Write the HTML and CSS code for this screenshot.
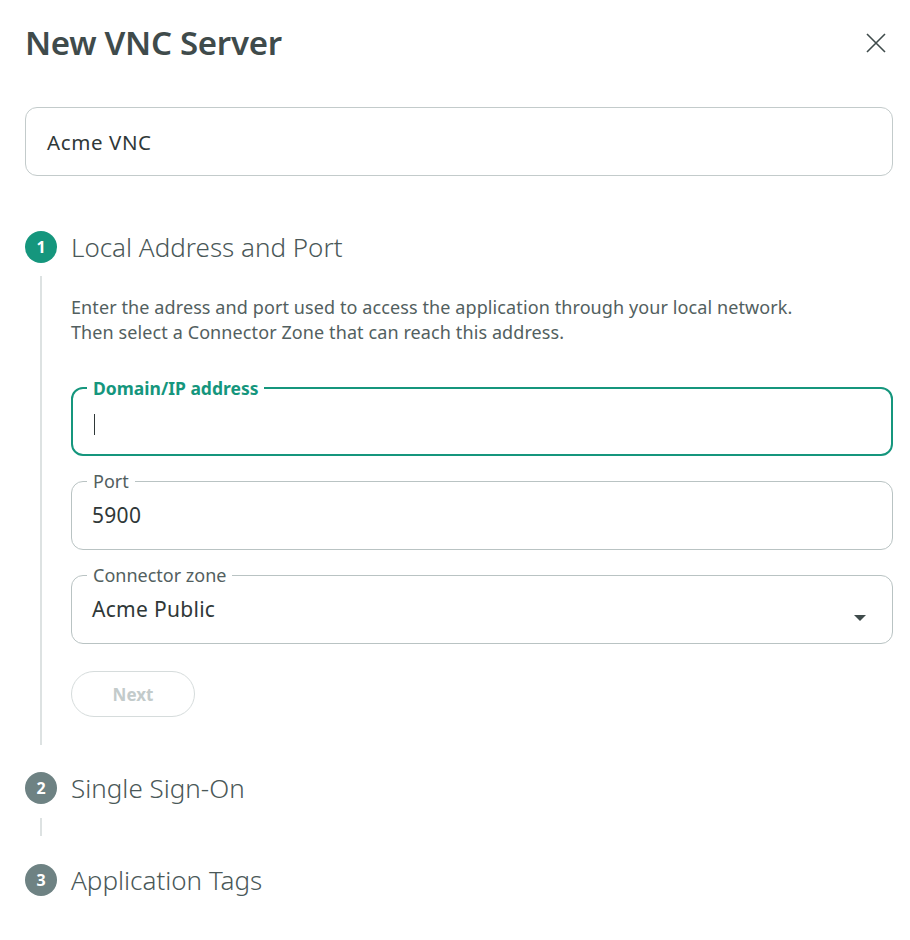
FILE: index.html
```html
<!DOCTYPE html>
<html lang="en">
<head>
  <meta charset="UTF-8">
  <title>New VNC Server</title>
  <link rel="stylesheet" href="styles.css">
</head>
<body>
  <div class="dialog">
    <div class="header">
      <h1>New VNC Server</h1>
      <button class="close" aria-label="Close">
        <svg width="22" height="22" viewBox="0 0 22 22"><path d="M2 2L20 20M20 2L2 20" stroke="#3f4b4b" stroke-width="1.6" fill="none"/></svg>
      </button>
    </div>

    <div class="name-box">Acme VNC</div>

    <div class="step active">
      <div class="step-head">
        <span class="num">1</span>
        <span class="step-title">Local Address and Port</span>
      </div>
      <div class="step-body">
        <p class="desc">Enter the adress and port used to access the application through your local network.<br>Then select a Connector Zone that can reach this address.</p>

        <fieldset class="field focused">
          <legend>Domain/IP address</legend>
          <div class="value"><span class="cursor"></span></div>
        </fieldset>

        <fieldset class="field">
          <legend>Port</legend>
          <div class="value">5900</div>
        </fieldset>

        <fieldset class="field select">
          <legend>Connector zone</legend>
          <div class="value">Acme Public</div>
          <span class="caret"></span>
        </fieldset>

        <button class="next" disabled>Next</button>
      </div>
    </div>

    <div class="step">
      <div class="step-head">
        <span class="num">2</span>
        <span class="step-title">Single Sign-On</span>
      </div>
      <div class="step-body short"></div>
    </div>

    <div class="step">
      <div class="step-head">
        <span class="num">3</span>
        <span class="step-title">Application Tags</span>
      </div>
    </div>
  </div>
</body>
</html>
```

FILE: styles.css
```css
body {
  margin: 0;
  background: white;
  font-family: "Noto Sans", sans-serif;
  color: #3f4b4b;
}
.dialog {
  padding: 21px 17px 0 25px;
}
.header {
  display: flex;
  justify-content: space-between;
  align-items: center;
  margin-bottom: 42px;
}
h1 {
  margin: 0;
  font-size: 33px;
  font-weight: 600;
  color: #3f4b4b;
  letter-spacing: -0.3px;
  line-height: 44px;
}
.close {
  border: none;
  background: none;
  padding: 0;
  width: 22px;
  height: 22px;
  margin-right: 6px;
  cursor: pointer;
}
.name-box {
  border: 1px solid #c3cbcb;
  border-radius: 12px;
  height: 67px;
  display: flex;
  align-items: center;
  padding-left: 21px;
  font-size: 20.5px;
  letter-spacing: 0.6px;
  color: #2f3838;
  margin-bottom: 55px;
}
.step-head {
  display: flex;
  align-items: center;
  height: 32px;
}
.num {
  width: 32px;
  height: 32px;
  border-radius: 50%;
  background: #6e8283;
  color: white;
  font-weight: 700;
  font-size: 16px;
  display: flex;
  align-items: center;
  justify-content: center;
  margin-right: 14px;
}
.active .num {
  background: #15967d;
}
.step-title {
  font-size: 26px;
  font-weight: 300;
  color: #4a5858;
}
.step-body {
  margin: 13px 0 27px 15px;
  border-left: 2px solid #dde2e2;
  padding: 0 0 28px 29px;
}
.step-body.short {
  height: 18px;
  padding: 0;
  margin-top: 14px;
  margin-bottom: 28px;
}
.desc {
  margin: 0 0 34px;
  padding-top: 19px;
  font-size: 18px;
  letter-spacing: 0.1px;
  line-height: 25px;
  color: #526060;
}
.field {
  position: relative;
  margin: 0 0 16px;
  padding: 0 20px;
  border: 1px solid #b9c3c3;
  border-radius: 12px;
  height: 76px;
  min-width: 0;
}
.field legend {
  padding: 0 6px;
  margin-left: -5px;
  font-size: 18px;
  color: #526060;
  line-height: 18px;
}
.field .value {
  font-size: 21px;
  letter-spacing: 0.3px;
  color: #2f3838;
  line-height: 26px;
  margin-top: 12px;
}
.field.focused {
  border: 2px solid #15967d;
  padding: 0 19px;
  height: 73px;
}
.field.focused legend {
  color: #15967d;
  font-weight: 700;
  font-size: 17.5px;
}
.cursor {
  display: inline-block;
  width: 1px;
  height: 21px;
  background: #2f3838;
  vertical-align: middle;
  margin-left: 2px;
}
.caret {
  position: absolute;
  right: 26px;
  top: 31px;
  border-left: 6px solid transparent;
  border-right: 6px solid transparent;
  border-top: 6px solid #3f4b4b;
}
.next {
  margin-top: 11px;
  width: 124px;
  height: 46px;
  border: 1px solid #d6dcdc;
  border-radius: 23px;
  background: white;
  color: #c3cbcb;
  font-family: inherit;
  font-size: 17px;
  font-weight: 700;
}
```
